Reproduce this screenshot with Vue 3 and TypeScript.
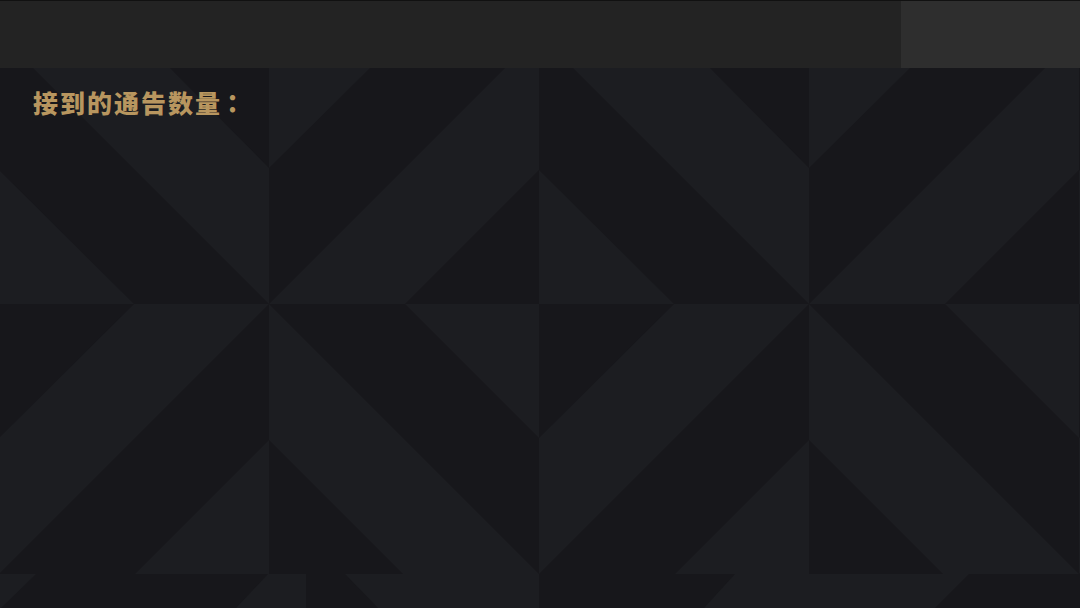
<script setup lang="ts">
const tile: string[] = [
  '34,68 171,68 270,168 270,304',
  '270,68 371,68 270,168',
  '506,68 540,68 540,170 406,304 270,304',
  '0,170 135,304 0,304',
  '135,304 270,304 0,574 0,438',
  '136,574 270,440 270,574',
  '270,304 540,574 404,574 270,440',
  '406,304 540,304 540,438',
]
const offsets: number[] = [-1, 539, 1079]
const bottom: string[] = [
  '0,574 36,574 1,608 0,608',
  '268,574 306,574 306,608 236,608',
  '345,574 539,574 539,608 378,608',
  '735,574 969,574 935,608 704,608',
]
</script>

<template>
  <div class="page">
    <header class="topbar">
      <div class="topbar-main"></div>
      <div class="topbar-side"></div>
    </header>
    <main class="panel">
      <svg class="pattern" viewBox="0 68 1080 540" aria-hidden="true">
        <g v-for="dx in offsets" :key="dx" :transform="`translate(${dx} 0)`">
          <polygon v-for="p in tile" :key="p" :points="p" class="light" />
        </g>
        <polygon v-for="p in bottom" :key="p" :points="p" class="light" />
      </svg>
      <h1 class="title">接到的通告数量<span class="colon">：</span></h1>
    </main>
  </div>
</template>

<style>
html, body { margin: 0; background: #17171b; }
</style>

<style scoped>
.page {
  width: 1080px;
  height: 608px;
  display: flex;
  flex-direction: column;
  overflow: hidden;
  background: #17171b;
}
.topbar {
  height: 68px;
  flex: none;
  display: flex;
  box-sizing: border-box;
  border-top: 1px solid #111;
}
.topbar-main { flex: 1; background: #232323; }
.topbar-side { width: 179px; background: #2e2e2e; }
.panel {
  position: relative;
  flex: 1;
  padding: 18px 33px;
}
.pattern {
  position: absolute;
  left: 0;
  top: 0;
  width: 1080px;
  height: 540px;
  display: block;
}
.light { fill: #1c1d21; }
.title {
  position: relative;
  margin: 0;
  font-family: "Noto Sans CJK SC", "Noto Sans", sans-serif;
  font-size: 25px;
  line-height: 32px;
  font-weight: 900;
  letter-spacing: 2px;
  color: #b8965f;
}
.colon {
  margin-left: -2px;
  font-family: "Noto Sans CJK TC", "Noto Sans CJK SC", sans-serif;
}
</style>
